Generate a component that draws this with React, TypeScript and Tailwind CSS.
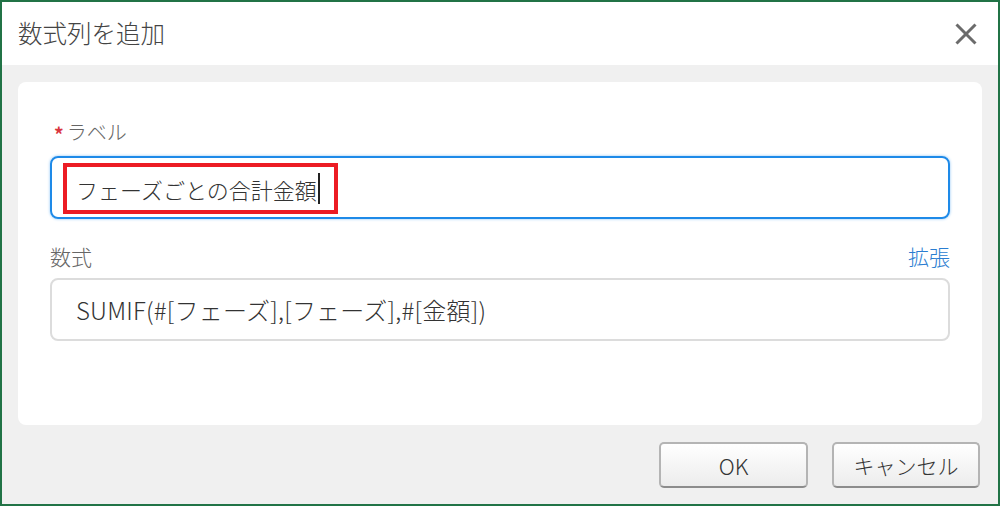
import React from "react";

const font = { fontFamily: '"Noto Sans CJK JP", "Noto Sans", sans-serif' };

export default function App() {
  return (
    <div
      className="w-[1000px] h-[506px] border-2 border-[#217346] bg-[#f0f0f0] flex flex-col box-border font-light"
      style={font}
    >
      <div className="h-[63px] bg-white flex items-center justify-between pl-[16px] pr-[21px] shrink-0">
        <div className="text-[24.5px] text-[#444444] leading-none">数式列を追加</div>
        <svg width="22" height="22" viewBox="0 0 22 22">
          <line x1="1.5" y1="1.5" x2="20.5" y2="20.5" stroke="#6b6b6b" strokeWidth="3" />
          <line x1="20.5" y1="1.5" x2="1.5" y2="20.5" stroke="#6b6b6b" strokeWidth="3" />
        </svg>
      </div>
      <div className="px-[16px] pt-[17px] shrink-0">
        <div className="h-[343px] bg-white rounded-[8px] px-[32px] flex flex-col">
          <div className="mt-[38px] h-[24px] flex items-center text-[20px] text-[#666666] leading-none pl-[4px]">
            <span className="text-[#d9363e] text-[19px] mr-[3px] mt-[2px] font-bold">*</span>
            <span>ラベル</span>
          </div>
          <div className="mt-[12px] h-[63px] border-2 border-[#1e8ae8] rounded-[8px] shadow-[0_0_3px_#8cc4f5] flex items-center">
            <div className="ml-[11px] mt-[2px] w-[275px] h-[51px] border-[4px] border-[#ec1c24] flex items-center pl-[9px]">
              <span className="text-[22px] text-[#333333] leading-none">フェーズごとの合計金額</span>
              <span className="w-[2px] h-[31px] bg-[#222222] ml-[1px]" />
            </div>
          </div>
          <div className="mt-[22px] h-[30px] flex items-center justify-between">
            <span className="text-[21px] text-[#666666] leading-none">数式</span>
            <span className="text-[21px] text-[#2a7dd1] leading-none">拡張</span>
          </div>
          <div className="mt-[7px] h-[63px] border-2 border-[#dcdcdc] rounded-[8px] flex items-center pl-[24px]">
            <span className="text-[24px] tracking-[0.2px] text-[#333333] leading-none">SUMIF(#[フェーズ],[フェーズ],#[金額])</span>
          </div>
        </div>
      </div>
      <div className="pt-[17px] pr-[18px] flex justify-end gap-[24px] shrink-0">
        <button className="w-[149px] h-[46px] border-2 border-[#b4b4b4] border-b-[#8c8c8c] rounded-[5px] bg-gradient-to-b from-white to-[#ececec] text-[22px] text-[#333333] leading-none flex items-center justify-center">
          OK
        </button>
        <button className="w-[148px] h-[46px] border-2 border-[#b4b4b4] border-b-[#8c8c8c] rounded-[5px] bg-gradient-to-b from-white to-[#ececec] text-[21px] text-[#333333] leading-none flex items-center justify-center">
          キャンセル
        </button>
      </div>
    </div>
  );
}
